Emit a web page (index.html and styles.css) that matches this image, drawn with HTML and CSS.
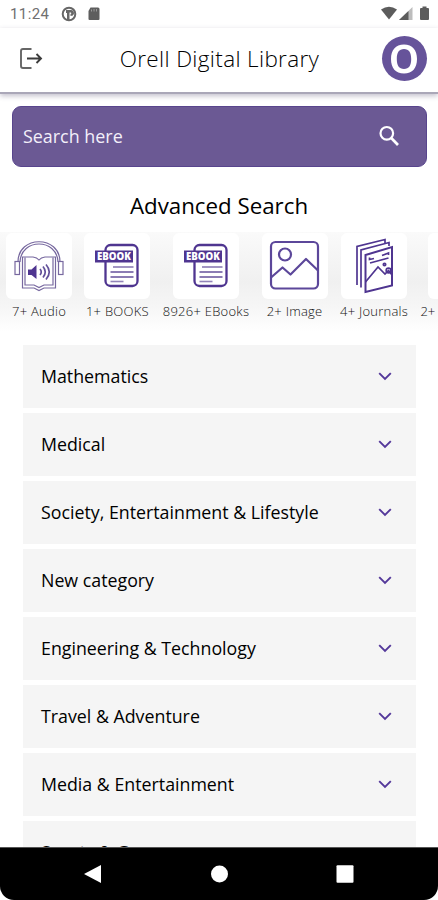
FILE: index.html
```html
<!DOCTYPE html>
<html lang="en">
<head>
    <title>Orell Digital Library</title>
    <meta charset="utf-8">
    <meta name="viewport" content="width=device-width, initial-scale=1.0">
    <link rel="stylesheet" href="styles.css">
</head>
<body>

    <!-- shared icons -->
    <svg class="defs" width="0" height="0">
        <symbol id="chevron" viewBox="0 0 14 9">
            <path d="M1.2 1.2 L7 7 L12.8 1.2" fill="none" stroke="#54389a" stroke-width="1.9"/>
        </symbol>
        <symbol id="ebook" viewBox="0 0 66 66">
            <rect x="21.5" y="12" width="32" height="41" rx="5" fill="#fff" stroke="#4f3590" stroke-width="2.3"/>
            <rect x="11" y="17.5" width="38" height="12" fill="#4f3590"/>
            <text x="13" y="27.3" class="ebook-text" textLength="34" lengthAdjust="spacingAndGlyphs">EBOOK</text>
            <g stroke="#64509b" stroke-width="1.6">
                <path d="M29 34 H49.500" opacity=".75"/>
                <path d="M26.500 39 H49.500"/>
                <path d="M26.500 44 H49.500"/>
                <path d="M26.500 48.500 H39.500" opacity=".7"/>
            </g>
        </symbol>
    </svg>

    <div class="phone">
        <div class="status">
            <span class="clock">11:24</span>
            <svg class="status-left" width="40" height="16" viewBox="0 0 40 16">
                <circle cx="8" cy="8" r="6.300" fill="none" stroke="#666" stroke-width="2"/>
                <path d="M5 4 H10 Q13 4 13 7.500 Q12.500 10 9.500 10 V8 Q11 7.500 10 6.500 H8.500 V14 H6 V7 H5 Z" fill="#666"/>
                <path d="M29.500 1.500 H37 Q38.500 1.500 38.500 3 V13 Q38.500 14 37.500 14 H28.500 Q27.500 14 27.500 13 V5 Z" fill="#5e5e5e"/>
                <path d="M30.500 3.500 V5.500 M33 3 V5.500 M35.500 3 V5.500" stroke="#aaa" stroke-width=".8"/>
            </svg>
            <svg class="status-right" width="50" height="16" viewBox="0 0 50 16">
                <path d="M1 3.500 Q9 -2 17 3.500 L9 13.500 Z" fill="#5c5c5c"/>
                <path d="M19 14 L32.500 1 V14 Z" fill="#bdbdbd"/>
                <path d="M19 14 L28.500 5 V14 Z" fill="#5c5c5c"/>
                <path d="M42.500 .5 H46.500 V2 H48 Q49 2 49 3 V13 Q49 14 48 14 H41 Q40 14 40 13 V3 Q40 2 41 2 H42.500 Z" fill="#5c5c5c"/>
            </svg>
        </div>

        <header class="topbar">
            <svg class="logout" width="24" height="24" viewBox="0 0 24 24">
                <path d="M12.500 2 H4 Q2 2 2 4 V19 Q2 21 4 21 H12.500" fill="none" stroke="#666" stroke-width="1.9"/>
                <path d="M8 11.500 H21.500 M17.500 7 L22 11.500 L17.500 16" fill="none" stroke="#3c3c3c" stroke-width="1.9"/>
            </svg>
            <h1>Orell Digital Library</h1>
            <div class="avatar">
                <svg width="28" height="32" viewBox="0 0 28 32">
                    <path fill="#fff" fill-rule="evenodd" d="M14 1.500 C22.500 1.500 27 7 27 16 C27 25 22.500 30.500 14 30.500 C5.500 30.500 1 25 1 16 C1 7 5.500 1.500 14 1.500 Z M14 6 C9 6 6.800 9.500 6.800 16 C6.800 22.500 9 26 14 26 C19 26 21.200 22.500 21.200 16 C21.200 9.500 19 6 14 6 Z"/>
                </svg>
            </div>
        </header>

        <main>
            <div class="search">
                <span>Search here</span>
                <svg width="22" height="22" viewBox="0 0 22 22">
                    <circle cx="8.800" cy="8.300" r="6.300" fill="none" stroke="#fff" stroke-width="2.200"/>
                    <path d="M13 12.800 L20 20" stroke="#fff" stroke-width="2.700"/>
                </svg>
            </div>

            <h2>Advanced Search</h2>

            <div class="types">
                <div class="type">
                    <svg class="card" viewBox="0 0 66 66" fill="none" stroke="#77689f" stroke-width="1.200">
                        <path d="M12 29 C12 2 54 2 54 29 M14 29 C15 5 51 5 52 29"/>
                        <rect x="9" y="28.500" width="4.500" height="13"/>
                        <rect x="52.500" y="28.500" width="4.500" height="13"/>
                        <path d="M16.500 24 H27 Q31 24.500 33 27 Q35 24.500 39 24 H49.500 V55 H38 L33 57.500 L28 55 H16.500 Z"/>
                        <path d="M19 24.500 V52 H28 L33 54.500 L38 52 H47 V24.500"/>
                        <path d="M22 36.500 H25.500 L30.500 32 V46 L25.500 42 H22 Z" fill="#4f3590" stroke="none"/>
                        <path d="M34 36 Q36.500 39 34 42 M37 33.500 Q41.500 39 37 44.500 M40 31.500 Q46.500 39 40 46.500" stroke="#62519a" stroke-width="1.700"/>
                    </svg>
                    <span>7+ Audio</span>
                </div>
                <div class="type">
                    <svg class="card"><use href="#ebook"/></svg>
                    <span>1+ BOOKS</span>
                </div>
                <div class="type">
                    <svg class="card"><use href="#ebook"/></svg>
                    <span>8926+ EBooks</span>
                </div>
                <div class="type">
                    <svg class="card" viewBox="0 0 66 66" fill="none" stroke="#5c479a" stroke-width="2.200">
                        <rect x="9" y="9" width="47" height="46.500" rx="4.500"/>
                        <circle cx="23" cy="21.500" r="6"/>
                        <path d="M9 44.500 L20.500 34.500 L28.500 41.500 L44 26 L56 37.500" stroke-linejoin="round"/>
                    </svg>
                    <span>2+ Image</span>
                </div>
                <div class="type">
                    <svg class="card" viewBox="0 0 66 66" fill="none" stroke="#4f3590" stroke-width="1.700">
                        <path d="M16 52 V13.500 L44 6.500 V10" />
                        <path d="M20 54.500 V17 L48 9.500 V13"/>
                        <path d="M24.500 22 L51 14 V52.500 L24.500 59 Z" stroke-width="2"/>
                        <path d="M24.500 49 L37 34 L44 41 L47.500 37.500 L51 42"/>
                        <path d="M28.500 24.500 V26.500 L33 25.500 M41 22.500 L47.500 20 V22 M29 30 L47.500 25"/>
                        <circle cx="43.500" cy="31.500" r="1.200"/>
                        <circle cx="47.500" cy="37.500" r="2.300"/>
                    </svg>
                    <span>4+ Journals</span>
                </div>
                <div class="type type-last">
                    <svg class="card"></svg>
                    <span>2+</span>
                </div>
            </div>

            <ul class="categories">
                <li><span>Mathematics</span><svg><use href="#chevron"/></svg></li>
                <li><span>Medical</span><svg><use href="#chevron"/></svg></li>
                <li><span>Society, Entertainment &amp; Lifestyle</span><svg><use href="#chevron"/></svg></li>
                <li><span>New category</span><svg><use href="#chevron"/></svg></li>
                <li><span>Engineering &amp; Technology</span><svg><use href="#chevron"/></svg></li>
                <li><span>Travel &amp; Adventure</span><svg><use href="#chevron"/></svg></li>
                <li><span>Media &amp; Entertainment</span><svg><use href="#chevron"/></svg></li>
                <li><span>Sports &amp; Games</span><svg><use href="#chevron"/></svg></li>
            </ul>
        </main>

        <nav class="navbar">
            <svg width="18" height="20" viewBox="0 0 18 20"><path d="M0 10 L17 1 V19 Z" fill="#fff"/></svg>
            <svg width="18" height="20" viewBox="0 0 18 20"><circle cx="9.500" cy="10" r="8.500" fill="#fff"/></svg>
            <svg width="18" height="20" viewBox="0 0 18 20"><rect x=".5" y="1.300" width="17" height="17.500" rx="1" fill="#fff"/></svg>
        </nav>
    </div>

</body>
</html>
```

FILE: styles.css
```css
* {
    box-sizing: border-box;
}

body {
    margin: 0;
    background: #fff;
    font-family: "Open Sans", "Noto Sans", sans-serif;
    overflow: hidden;
}

.defs {
    display: none;
}

.phone {
    display: flex;
    flex-direction: column;
    width: 438px;
    height: 900px;
    background: #fff;
}

/* status bar */
.status {
    display: flex;
    align-items: center;
    height: 28px;
    padding: 0 8px 0 10px;
    flex: none;
}

.clock {
    width: 51px;
    font-family: Roboto, sans-serif;
    font-size: 15px;
    letter-spacing: .4px;
    color: #707070;
}

.status-right {
    margin-left: auto;
}

/* title bar */
.topbar {
    display: flex;
    align-items: center;
    justify-content: space-between;
    height: 66px;
    padding: 0 11px 3px 19px;
    flex: none;
    border-bottom: 2px solid #aaa7b8;
    box-shadow: 0 2px 5px rgba(60, 50, 90, .3);
}

h1 {
    margin: 0 0 0 14px;
    font-size: 22.5px;
    font-weight: 300;
    letter-spacing: .35px;
    color: #000;
}

.avatar {
    display: flex;
    align-items: center;
    justify-content: center;
    width: 45px;
    height: 45px;
    border-radius: 50%;
    background: #66539a;
}

main {
    flex: 1;
    min-height: 0;
    overflow: hidden;
    padding-top: 12px;
}

.search {
    display: flex;
    align-items: center;
    justify-content: space-between;
    height: 61px;
    margin: 0 11px 0 12px;
    padding: 0 26px 2px 10px;
    border-radius: 9px;
    border: 1px solid #58458d;
    background: #6b5994;
    color: #f3effa;
    font-size: 17.9px;
}

h2 {
    margin: 22px 0 0;
    height: 43px;
    line-height: 34px;
    text-align: center;
    font-size: 22.3px;
    font-weight: 400;
    color: #000;
}

/* horizontally scrolled media types */
.types {
    display: flex;
    gap: 12.4px;
    height: 100px;
    padding: 1px 0 0 6px;
    overflow: hidden;
    background: linear-gradient(#fafafa, #f0f0f0 50%, #f6f6f6 75%, #fff);
}

.type {
    display: flex;
    flex-direction: column;
    align-items: center;
    flex: none;
    min-width: 66px;
    font-size: 13px;
    font-weight: 300;
    letter-spacing: .25px;
    line-height: 18px;
    color: #111;
    white-space: nowrap;
}

.type-last {
    min-width: 82px;
}

.type-last span {
    align-self: flex-start;
    letter-spacing: 0;
}

.card {
    width: 66px;
    height: 66px;
    margin-bottom: 3px;
    border-radius: 6px;
    background: #fff;
}

.ebook-text {
    font-size: 11px;
    font-weight: 800;
    letter-spacing: 0;
    fill: #fff;
}

.categories {
    display: flex;
    flex-direction: column;
    gap: 5px;
    margin: 13px 22px 0 23px;
    padding: 0;
    list-style: none;
}

.categories li {
    display: flex;
    align-items: center;
    justify-content: space-between;
    height: 63px;
    padding: 0 24px 0 18px;
    background: #f5f5f5;
    font-size: 17.8px;
    color: #000;
}

.categories span {
    padding-bottom: 2px;
}

.categories svg {
    width: 14px;
    height: 9px;
}

/* android buttons */
.navbar {
    display: flex;
    align-items: center;
    justify-content: space-between;
    flex: none;
    height: 53px;
    padding: 0 84px;
    background: #000;
    border-top: 1px solid #555;
    border-radius: 0 0 14px 14px;
}
```
